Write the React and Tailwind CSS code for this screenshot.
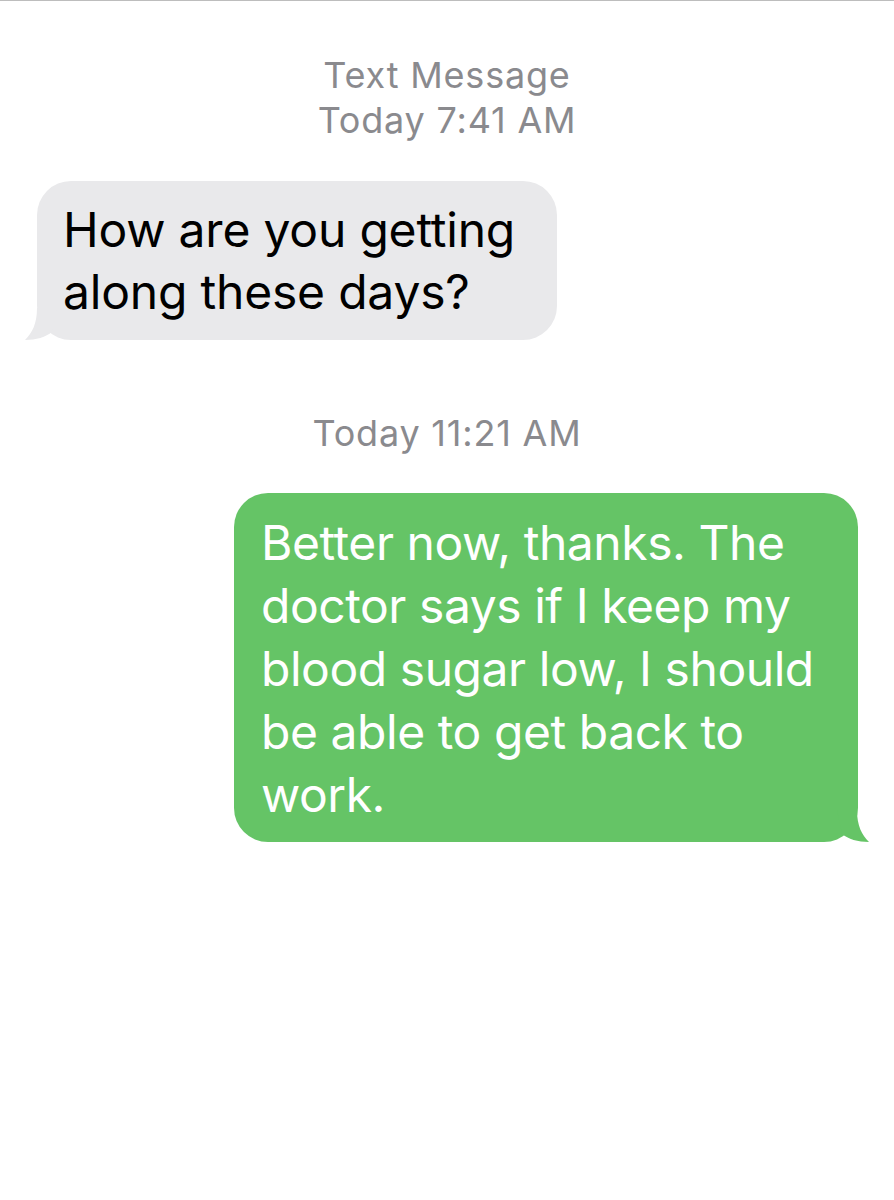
import React from 'react';

const font = { fontFamily: 'Inter, "Liberation Sans", sans-serif' };

const Stamp = ({ lines, className = '' }) => (
    <div className={`text-center text-[#8a8a8e] text-[36px] leading-[45px] tracking-[0.8px] ${className}`}>
        {lines.map((l, i) => <div key={i}>{l}</div>)}
    </div>
);

// bubble tails, tucked into the bottom corner
const TailLeft = () => (
    <svg className="absolute left-[-12px] bottom-0" width="32" height="32" viewBox="0 0 32 32">
        <path d="M32 0 L12 0 C12 16 7 25 0 32 C11 32 21 29 27 24 Z" fill="#e9e9eb" />
    </svg>
);

const TailRight = () => (
    <svg className="absolute right-[-11px] bottom-0" width="32" height="32" viewBox="0 0 32 32">
        <path d="M0 0 L20 0 C20 16 25 25 32 32 C21 32 11 29 5 24 Z" fill="#65c466" />
    </svg>
);

export default function App() {
    const reply = [
        'Better now, thanks. The',
        'doctor says if I keep my',
        'blood sugar low, I should',
        'be able to get back to',
        'work.',
    ];

    return (
        <div className="w-[894px] h-[1200px] bg-white border-t border-[#bdbdbd] overflow-hidden" style={font}>
            <Stamp lines={['Text Message', 'Today 7:41 AM']} className="pt-[52px]" />

            <div className="mt-[38px] pl-[37px] flex">
                <div className="relative w-[520px] bg-[#e9e9eb] rounded-[34px] pl-[26px] pt-[18px] pb-[17px] text-black text-[48px] leading-[62px] tracking-[-0.2px]">
                    <TailLeft />
                    <div className="relative whitespace-nowrap">How are you getting</div>
                    <div className="relative whitespace-nowrap">along these days?</div>
                </div>
            </div>

            <Stamp lines={['Today 11:21 AM']} className="mt-[71px]" />

            <div className="mt-[37px] pr-[36px] flex justify-end">
                <div className="relative bg-[#65c466] rounded-[34px] w-[624px] pl-[27px] pt-[18px] pb-[16px] text-white text-[48px] leading-[63px] tracking-[-0.45px]">
                    <TailRight />
                    {reply.map((l, i) => (
                        <div key={i} className="relative whitespace-nowrap">{l}</div>
                    ))}
                </div>
            </div>
        </div>
    );
}
